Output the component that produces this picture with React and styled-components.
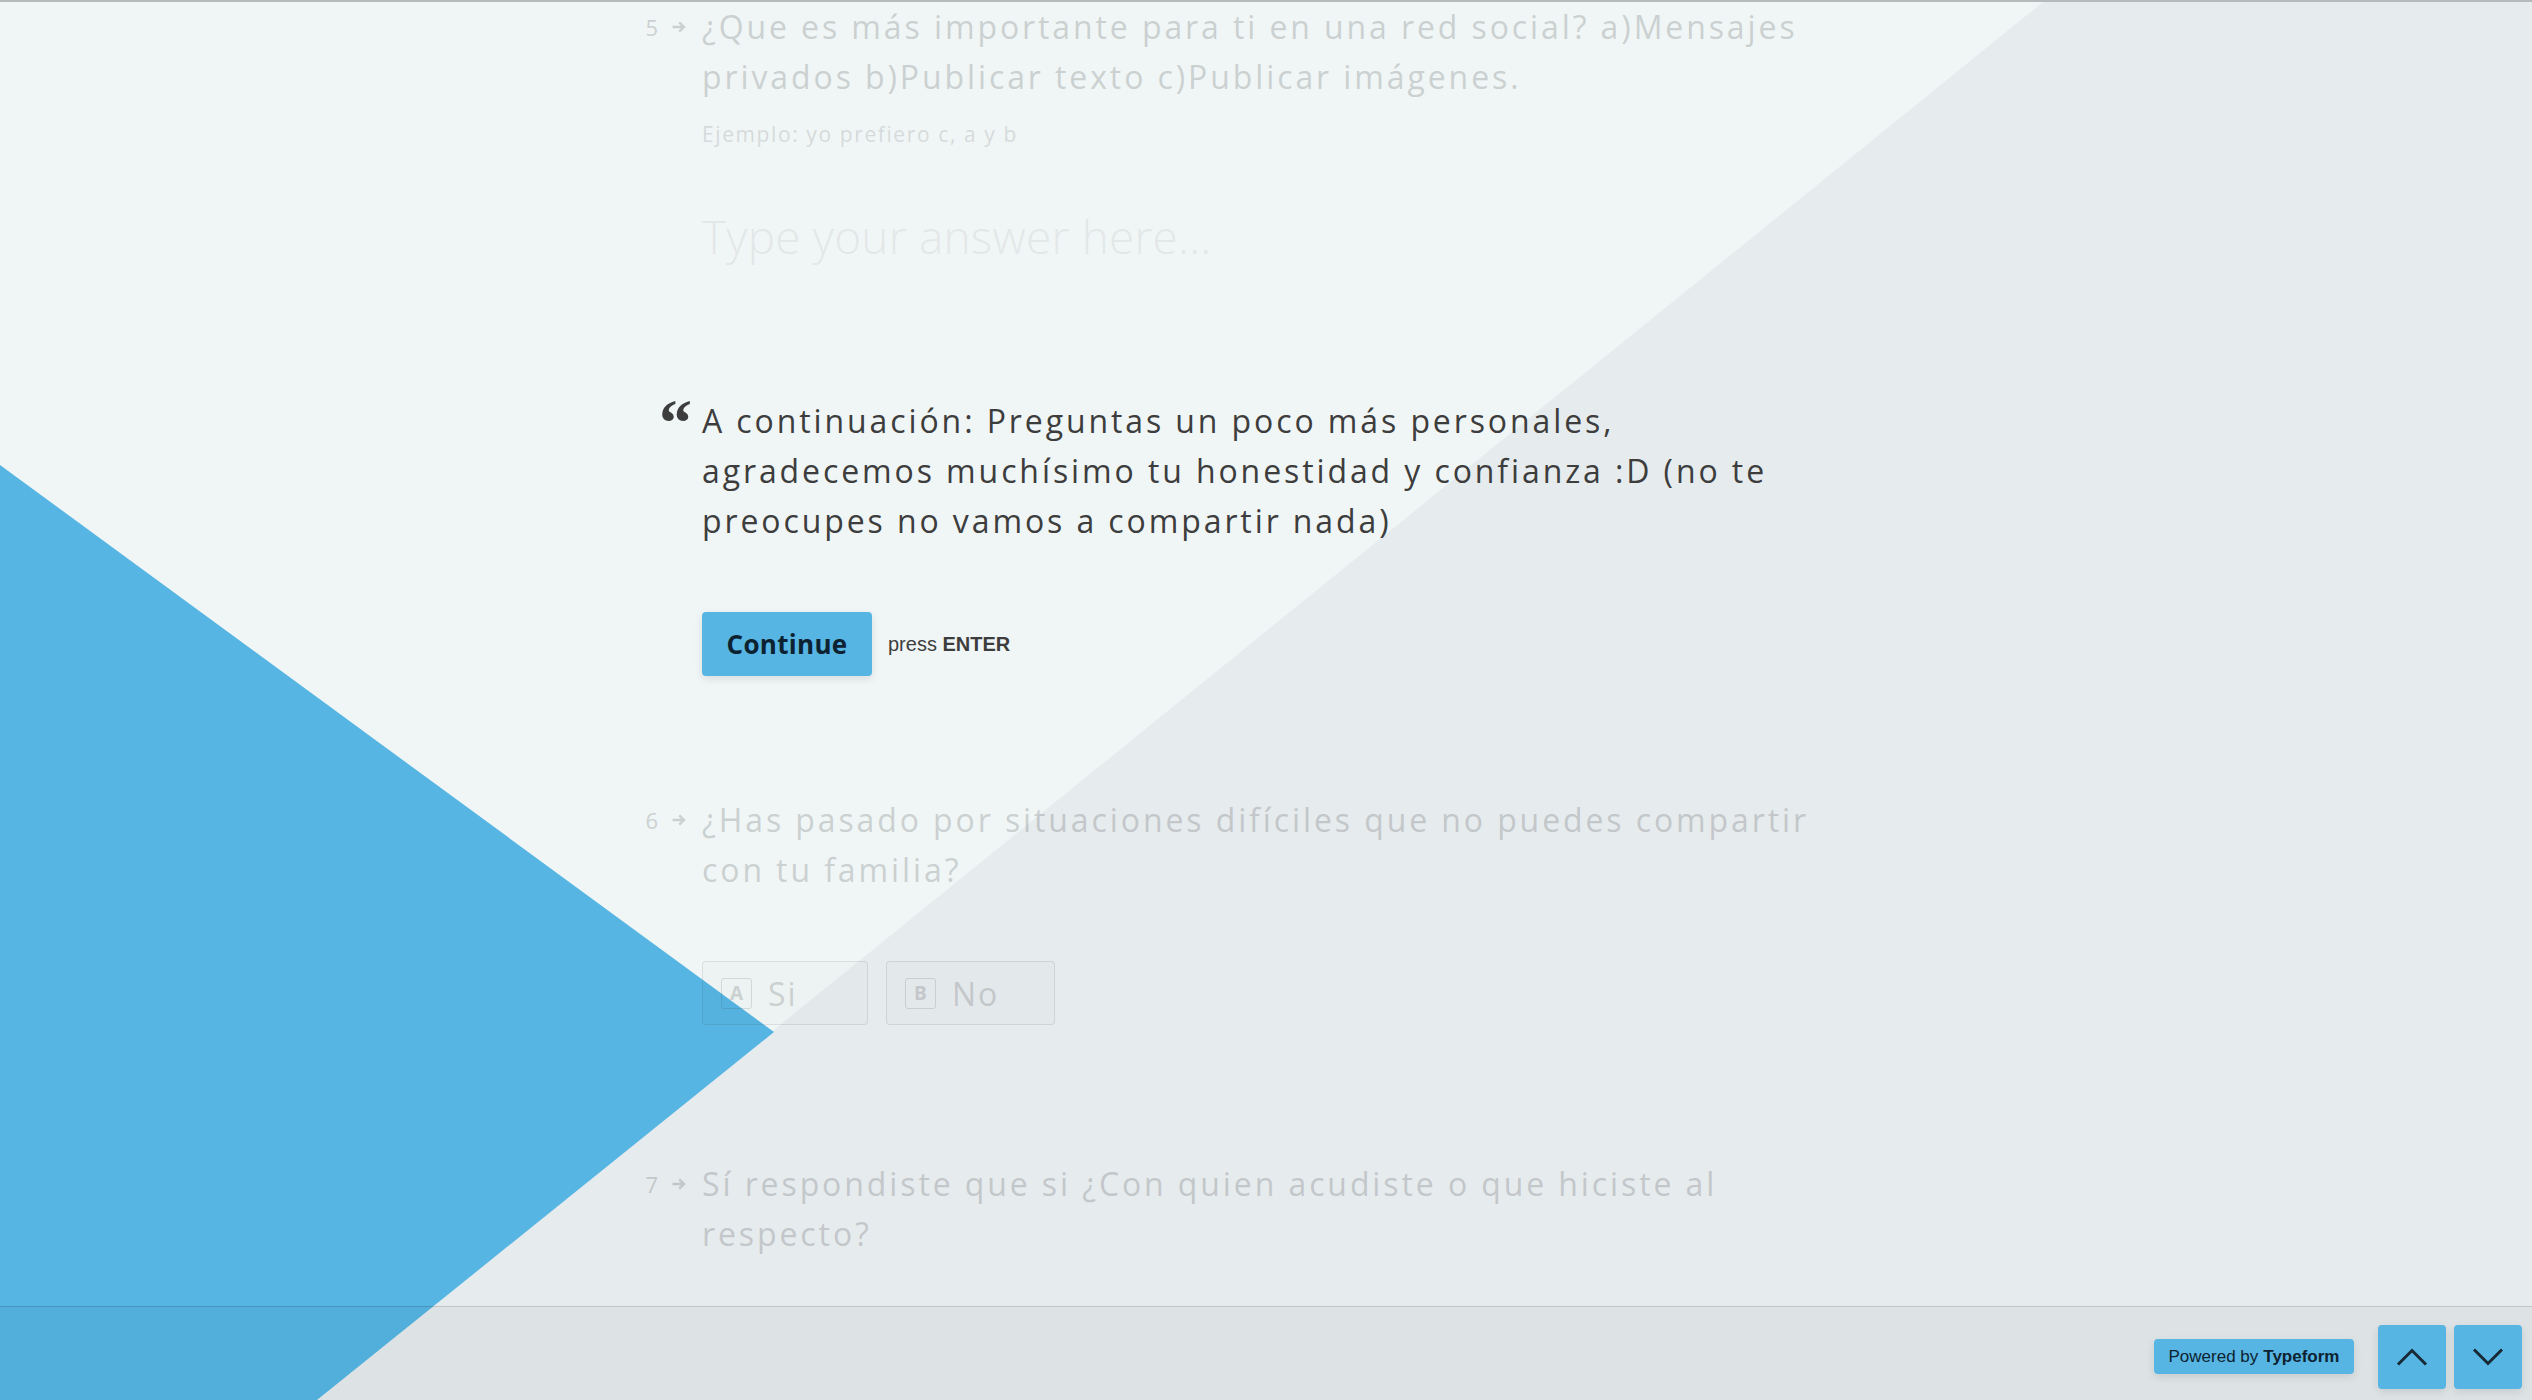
import React from "react";
import styled, { createGlobalStyle } from "styled-components";

const GlobalStyle = createGlobalStyle`
  html, body {
    margin: 0;
    padding: 0;
  }
  body {
    font-family: "Open Sans", "Liberation Sans", sans-serif;
    color: #3d3d3d;
  }
`;

const Page = styled.div`
  position: relative;
  height: 100vh;
  display: flex;
  flex-direction: column;
  overflow: hidden;
  background: #f0f6f6;
  border-top: 2px solid #b6babc;
  box-sizing: border-box;
`;

const Backdrop = styled.svg`
  position: absolute;
  inset: 0;
  width: 100%;
  height: 100%;
  z-index: 0;
`;

const Main = styled.main`
  position: relative;
  z-index: 1;
  flex: 1;
  overflow: hidden;
`;

const Row = styled.section`
  display: grid;
  grid-template-columns: 1fr 1128px 1fr;
  margin-top: ${(p) => p.$top || 0}px;
  opacity: ${(p) => (p.$faded ? 0.2 : 1)};
`;

const Gutter = styled.div`
  grid-column: 1;
  justify-self: end;
  display: flex;
  align-items: center;
  gap: 14px;
  height: 50px;
  padding-right: 16px;
  font-size: 22px;
  color: #3d3d3d;
`;

const Quote = styled.div`
  grid-column: 1;
  justify-self: end;
  padding-right: 10px;
  font-family: "Liberation Serif", "Times New Roman", serif;
  font-size: 66px;
  font-weight: 700;
  line-height: 66px;
  height: 40px;
  margin-top: -6px;
  color: #3d3d3d;
`;

const Body = styled.div`
  grid-column: 2;
`;

const Title = styled.h2`
  margin: 0;
  font-size: 32px;
  font-weight: 400;
  line-height: 50px;
  letter-spacing: 2.9px;
  color: #3d3d3d;
`;

const Hint = styled.p`
  margin: 17px 0 0;
  font-size: 21px;
  line-height: 30px;
  letter-spacing: 1.6px;
  color: #6f6f6f;
`;

const Placeholder = styled.div`
  margin-top: 57px;
  font-size: 46px;
  line-height: 60px;
  font-weight: 300;
  letter-spacing: 0.2px;
  color: #b0b0b0;
`;

const Actions = styled.div`
  display: flex;
  align-items: center;
  gap: 16px;
  margin-top: 66px;
`;

const Button = styled.button`
  height: 64px;
  width: 170px;
  border: none;
  border-radius: 4px;
  background: #56b5e2;
  box-shadow: 0 3px 8px rgba(0, 0, 0, 0.1);
  color: #0d2230;
  font-family: "Open Sans", sans-serif;
  font-size: 26px;
  font-weight: 700;
  letter-spacing: 0.3px;
  cursor: pointer;
`;

const Press = styled.span`
  font-family: "Liberation Sans", Arial, sans-serif;
  font-size: 20px;
  color: #3d3d3d;

  b {
    font-weight: 700;
  }
`;

const Choices = styled.div`
  display: flex;
  gap: 18px;
  margin-top: 66px;
`;

const Choice = styled.div`
  box-sizing: border-box;
  width: ${(p) => p.$w}px;
  height: 64px;
  padding-left: 18px;
  display: flex;
  align-items: center;
  gap: 16px;
  border: 1px solid rgba(61, 61, 61, 0.6);
  border-radius: 4px;
  background: rgba(61, 61, 61, 0.08);
  font-size: 32px;
  letter-spacing: 2px;
  color: #3d3d3d;
`;

const Key = styled.span`
  box-sizing: border-box;
  width: 31px;
  height: 31px;
  display: flex;
  align-items: center;
  justify-content: center;
  border: 1px solid rgba(61, 61, 61, 0.8);
  border-radius: 3px;
  font-size: 19px;
  font-weight: 700;
  letter-spacing: 0;
`;

const Footer = styled.footer`
  position: relative;
  z-index: 1;
  height: 94px;
  flex-shrink: 0;
  display: flex;
  align-items: center;
  justify-content: flex-end;
  gap: 8px;
  padding: 6px 10px 0 0;
  box-sizing: border-box;
  border-top: 1px solid rgba(0, 0, 0, 0.13);
  background: rgba(0, 0, 0, 0.035);
`;

const Powered = styled.a`
  height: 35px;
  width: 200px;
  box-sizing: border-box;
  margin-right: 16px;
  display: flex;
  align-items: center;
  justify-content: center;
  gap: 5px;
  border-radius: 4px;
  background: #56b5e2;
  box-shadow: 0 3px 8px rgba(0, 0, 0, 0.1);
  font-family: "Liberation Sans", Arial, sans-serif;
  font-size: 17px;
  color: #0d2230;
  text-decoration: none;
`;

const NavButton = styled.button`
  width: 68px;
  height: 64px;
  border: none;
  border-radius: 4px;
  background: #56b5e2;
  box-shadow: 0 3px 8px rgba(0, 0, 0, 0.1);
  display: flex;
  align-items: center;
  justify-content: center;
  padding: 0;
  cursor: pointer;
`;

const Arrow = () => (
  <svg width="14" height="12" viewBox="0 0 14 12">
    <path d="M0.5 6h11.5M7.2 1.4L12 6l-4.8 4.6" fill="none" stroke="#3d3d3d" strokeWidth="2.4" />
  </svg>
);

const Chevron = ({ up }) => (
  <svg width="32" height="18" viewBox="0 0 32 18">
    <path
      d={up ? "M2 16.5L16 2.5l14 14" : "M2 1.5l14 14 14-14"}
      fill="none"
      stroke="#172a36"
      strokeWidth="3"
    />
  </svg>
);

const Counter = ({ n }) => (
  <Gutter>
    <span>{n}</span>
    <Arrow />
  </Gutter>
);

export default function App() {
  return (
    <>
      <GlobalStyle />
      <Page>
        <Backdrop viewBox="0 0 2532 1398" preserveAspectRatio="none">
          <polygon points="2043,0 2532,0 2532,1398 317,1398" fill="#e6ebee" />
          <polygon points="0,463 774,1030 317,1398 0,1398" fill="#56b5e2" />
        </Backdrop>
        <Main>
          <Row $faded>
            <Counter n={5} />
            <Body>
              <Title>
                ¿Que es más importante para ti en una red social? a)Mensajes
                <br />
                privados b)Publicar texto c)Publicar imágenes.
              </Title>
              <Hint>Ejemplo: yo prefiero c, a y b</Hint>
              <Placeholder>Type your answer here...</Placeholder>
            </Body>
          </Row>

          <Row $top={130}>
            <Quote>“</Quote>
            <Body>
              <Title>
                A continuación: Preguntas un poco más personales,
                <br />
                agradecemos muchísimo tu honestidad y confianza :D (no te
                <br />
                preocupes no vamos a compartir nada)
              </Title>
              <Actions>
                <Button>Continue</Button>
                <Press>
                  press <b>ENTER</b>
                </Press>
              </Actions>
            </Body>
          </Row>

          <Row $faded $top={119}>
            <Counter n={6} />
            <Body>
              <Title>
                ¿Has pasado por situaciones difíciles que no puedes compartir
                <br />
                con tu familia?
              </Title>
              <Choices>
                <Choice $w={166}>
                  <Key>A</Key>
                  Si
                </Choice>
                <Choice $w={169}>
                  <Key>B</Key>
                  No
                </Choice>
              </Choices>
            </Body>
          </Row>

          <Row $faded $top={134}>
            <Counter n={7} />
            <Body>
              <Title>
                Sí respondiste que si ¿Con quien acudiste o que hiciste al
                <br />
                respecto?
              </Title>
            </Body>
          </Row>
        </Main>
        <Footer>
          <Powered href="#">
            Powered by <b>Typeform</b>
          </Powered>
          <NavButton aria-label="previous">
            <Chevron up />
          </NavButton>
          <NavButton aria-label="next">
            <Chevron />
          </NavButton>
        </Footer>
      </Page>
    </>
  );
}
